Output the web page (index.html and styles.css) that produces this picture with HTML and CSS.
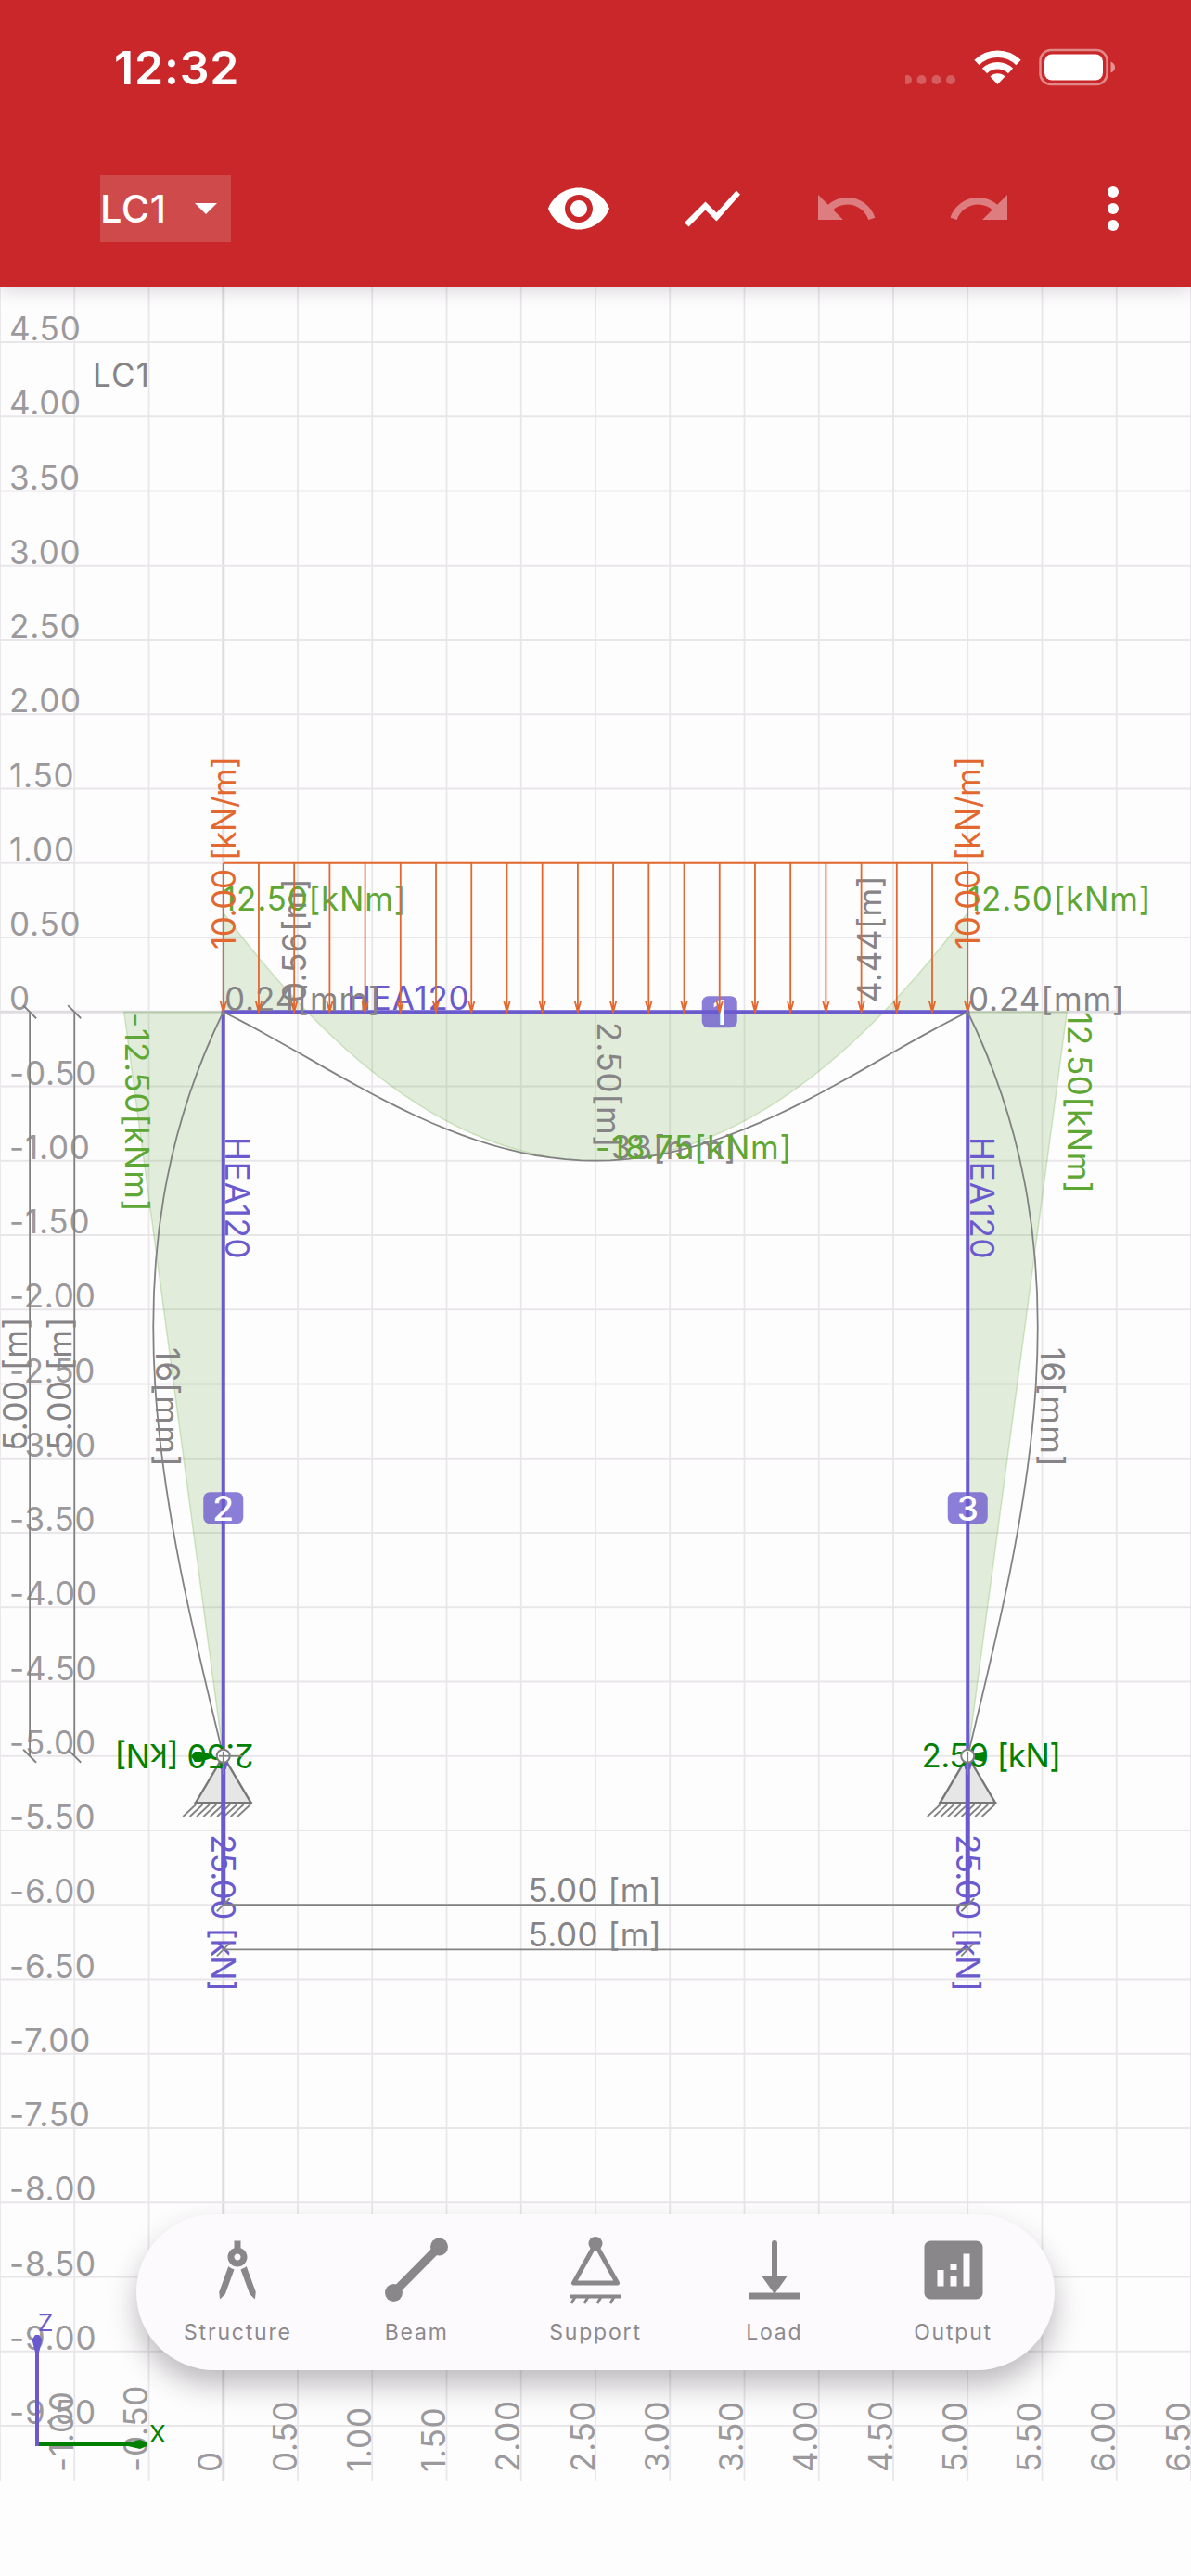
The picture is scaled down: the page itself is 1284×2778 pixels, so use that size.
FILE: index.html
```
<!DOCTYPE html>
<html lang="en">
<head>
    <meta charset="UTF-8">
    <meta name="viewport" content="width=device-width, initial-scale=1.0">
    <title>Frame Design</title>
    <link rel="stylesheet" href="styles.css">
</head>
<body>
    <header class="header">
        <div class="status-bar">
            <span class="time">12:32</span>
            <svg class="status-icons" width="226" height="42" viewBox="976 52 226 42">
                <g fill="#fff" opacity=".25">
                    <circle cx="978" cy="86" r="5"/>
                    <circle cx="993.5" cy="86" r="5"/>
                    <circle cx="1009.5" cy="86" r="5"/>
                    <circle cx="1025" cy="86" r="5"/>
                </g>
                <g fill="none" stroke="#fff" stroke-width="7.5">
                    <path d="M1053 67.5a32 32 0 0 1 45 0"/>
                    <path d="M1061.5 76.500a20 20 0 0 1 28 0"/>
                </g>
                <path d="M1075.500 91l-8-8.500a11.500 11.500 0 0 1 16 0z" fill="#fff"/>
                <rect x="1121.500" y="54" width="72" height="37" rx="11.500" fill="none" stroke="#fff" stroke-width="2.500" opacity=".45"/>
                <rect x="1126" y="58.500" width="63" height="28" rx="8" fill="#fff"/>
                <path d="M1197.500 66.500q4.500 2 4.500 6t-4.500 6z" fill="#fff" opacity=".5"/>
            </svg>
        </div>
        <div class="toolbar">
            <button class="load-case">LC1
                <svg width="24" height="12" viewBox="0 0 24 12"><path d="M0 0h24L12 12z"/></svg>
            </button>
            <div class="actions">
                <svg class="icon" viewBox="0 0 24 24"><path d="M12 4.500C7 4.500 2.730 7.610 1 12c1.730 4.390 6 7.500 11 7.500s9.270-3.110 11-7.500c-1.730-4.390-6-7.500-11-7.500zM12 17c-2.760 0-5-2.240-5-5s2.240-5 5-5 5 2.240 5 5-2.240 5-5 5zm0-8c-1.660 0-3 1.340-3 3s1.340 3 3 3 3-1.340 3-3-1.340-3-3-3z"/></svg>
                <svg class="icon" viewBox="0 0 24 24"><path d="M3.500 18.490l6-6.010 4 4L22 6.920l-1.410-1.410-7.090 7.970-4-4L2 16.990z"/></svg>
                <svg class="icon disabled" viewBox="0 0 24 24"><path d="M12.500 8c-2.650 0-5.050.99-6.900 2.600L2 7v9h9l-3.620-3.620c1.390-1.160 3.160-1.880 5.120-1.880 3.540 0 6.550 2.310 7.600 5.500l2.370-.78C21.080 11.030 17.150 8 12.500 8z"/></svg>
                <svg class="icon disabled" viewBox="0 0 24 24"><path d="M18.400 10.600C16.550 8.990 14.150 8 11.500 8c-4.650 0-8.580 3.030-9.960 7.220L3.900 16c1.050-3.190 4.050-5.500 7.600-5.500 1.950 0 3.730.72 5.120 1.880L13 16h9V7l-3.600 3.600z"/></svg>
                <svg class="icon" viewBox="0 0 24 24"><circle cx="12" cy="6" r="2"/><circle cx="12" cy="12" r="2"/><circle cx="12" cy="18" r="2"/></svg>
            </div>
        </div>
    </header>

    <main class="workspace">
        <svg id="drawing" class="drawing" width="1284" height="2367" viewBox="0 309 1284 2367"></svg>
    </main>

    <nav class="dock">
        <a class="dock-item">
            <svg viewBox="0 0 24 24"><path fill-rule="evenodd" d="M6.360 18.780L6.610 21l1.620-1.540 2.770-7.600c-.68-.17-1.280-.51-1.770-.98zM14.770 10.880c-.49.47-1.100.81-1.770.98l2.770 7.600L17.390 21l.26-2.220zM15 8c0-1.300-.84-2.400-2-2.820V3h-2v2.180C9.840 5.600 9 6.700 9 8c0 1.660 1.340 3 3 3s3-1.340 3-3zM12 9c-.55 0-1-.45-1-1s.45-1 1-1 1 .45 1 1-.45 1-1 1z"/></svg>
            <span>Structure</span>
        </a>
        <a class="dock-item">
            <svg viewBox="0 0 84 84"><circle cx="66.500" cy="17" r="9.500"/><circle cx="17.500" cy="66.500" r="9.500"/><path d="M17.500 66.500l49-49.500" stroke-width="9"/></svg>
            <span>Beam</span>
        </a>
        <a class="dock-item">
            <svg viewBox="0 0 84 84"><circle cx="42" cy="13.500" r="7.500"/><path d="M42 14L18.500 56h47z" fill="none" stroke-width="5" stroke-linejoin="round"/><path d="M14 70.500h56" stroke-width="4"/><path d="M20 71l-4 7M34 71l-4 7M48 71l-4 7M62 71l-4 7" stroke-width="3"/></svg>
            <span>Support</span>
        </a>
        <a class="dock-item">
            <svg viewBox="0 0 84 84"><path d="M42 13v44" stroke-width="6" stroke-linecap="round"/><path d="M28.500 49h27L42 68z"/><path d="M14 66.500h56v7H14z"/></svg>
            <span>Load</span>
        </a>
        <a class="dock-item">
            <svg viewBox="0 0 24 24"><path fill-rule="evenodd" d="M19 3H5c-1.100 0-2 .9-2 2v14c0 1.100.9 2 2 2h14c1.100 0 2-.9 2-2V5c0-1.100-.9-2-2-2zM9 17H7v-5h2v5zm4 0h-2v-3h2v3zm0-5h-2v-2h2v2zm4 5h-2V7h2v10z"/></svg>
            <span>Output</span>
        </a>
    </nav>
    <script src="script.js"></script>
</body>
</html>
```
FILE: styles.css
```
*{
    padding: 0;
    margin: 0;
    box-sizing: border-box;
}
body{
    width: 1284px;
    height: 2778px;
    overflow: hidden;
    background-color: #fefdfe;
    font-family: Inter, "Liberation Sans", sans-serif;
}
.header{
    position: relative;
    height: 309px;
    background-color: #c92729;
    color: #fff;
    box-shadow: 0 2px 20px rgba(60, 50, 60, 0.24);
}
.status-bar{
    height: 146px;
    padding: 0 82px 0 123px;
    display: flex;
    justify-content: space-between;
    align-items: center;
}
.time{
    font-size: 50px;
    font-weight: 600;
    letter-spacing: 0.8px;
}
.toolbar{
    height: 158px;
    padding: 0 48px 0 108px;
    display: flex;
    justify-content: space-between;
    align-items: center;
}
.load-case{
    width: 141px;
    height: 72px;
    padding: 0 15px 0 0;
    display: flex;
    justify-content: space-between;
    align-items: center;
    border: none;
    background-color: #cf4a4a;
    color: #fff;
    font-family: inherit;
    font-size: 41.5px;
    font-weight: 500;
    letter-spacing: 0.5px;
}
.load-case svg{
    fill: #fff;
}
.actions{
    display: flex;
    gap: 72px;
}
.icon{
    width: 72px;
    height: 72px;
    fill: #fff;
}
.disabled{
    opacity: 0.4;
}
.workspace{
    height: 2367px;
}
.drawing{
    display: block;
}

/* drawing */
.grid{
    stroke: #e9e6ea;
    stroke-width: 1.8;
}
.axis{
    stroke: #dfdce0;
    stroke-width: 3;
}
.drawing text{
    font-size: 35px;
}
.label{
    fill: #9b999c;
}
.gray{
    fill: #868486;
}
.green{
    fill: #5fa735;
}
.orange{
    fill: #e2682f;
}
.purple{
    fill: #6a5acd;
}
.reaction{
    fill: #008000;
}
.moment{
    fill: #5fa735;
    fill-opacity: 0.18;
    stroke: #5fa735;
    stroke-opacity: 0.25;
    stroke-width: 1.5;
}
.thin{
    fill: none;
    stroke: #828282;
    stroke-width: 1.8;
}
.member{
    stroke: #6a5acd;
    stroke-width: 4;
}
.force{
    stroke: #6a5acd;
    stroke-width: 5;
}
.load{
    fill: none;
    stroke: #e2682f;
    stroke-width: 1.8;
}
.badge{
    fill: #6a5acd;
    fill-opacity: 0.78;
}
.drawing .badge-text{
    fill: #fff;
    font-size: 37px;
    font-weight: 500;
    text-anchor: middle;
}
.support{
    fill: #808080;
    fill-opacity: 0.18;
    stroke: #777;
    stroke-width: 2.4;
}
.base{
    stroke: #777;
    stroke-width: 3.2;
}
.hinge{
    fill: #fff;
    stroke: #808080;
    stroke-width: 2;
}
.drawing .axis-name{
    font-size: 26px;
}

/* bottom menu */
.dock{
    position: absolute;
    left: 147px;
    top: 2388px;
    width: 990px;
    height: 168px;
    padding: 18px 13px 0;
    display: flex;
    border-radius: 84px;
    background-color: #fcfafd;
    box-shadow: 0 16px 30px rgba(40, 35, 40, 0.3);
}
.dock-item{
    flex: 1;
    display: flex;
    flex-direction: column;
    align-items: center;
    gap: 11px;
    color: #8c898d;
    font-size: 23px;
    letter-spacing: 1.8px;
}
.dock-item svg{
    width: 84px;
    height: 84px;
    fill: #8a878b;
}
.dock-item path[stroke-width]{
    stroke: #8a878b;
}
```
FILE: script.js
```
const drawing = document.getElementById('drawing');

// one metre is 160.5px, the origin is the top of the left column
const M = 160.5;
const X0 = 240.75;
const Y0 = 1091.25;
const X5 = X0 + 5 * M;
const Y5 = Y0 + 5 * M;
const px = m => X0 + m * M;
const py = m => Y0 - m * M;

let out = '';

function line(x1, y1, x2, y2, cls) {
  out += `<line x1="${x1}" y1="${y1}" x2="${x2}" y2="${y2}" class="${cls}"/>`;
}
function path(d, cls) {
  out += `<path d="${d}" class="${cls}"/>`;
}
function text(str, x, y, cls, angle = 0, spacing = 0.8) {
  out += `<text transform="translate(${x} ${y}) rotate(${angle})" class="${cls}" letter-spacing="${spacing}">${str}</text>`;
}
function format(m) {
  return m === 0 ? '0' : m.toFixed(2);
}

// grid
for (let m = -1.5; m <= 6.5; m += 0.5) {
  line(px(m), 309, px(m), 2676, m === 0 ? 'axis' : 'grid');
}
for (let m = 4.5; m >= -9.5; m -= 0.5) {
  line(0, py(m), 1284, py(m), m === 0 ? 'axis' : 'grid');
  text(format(m), 10, py(m) - 2, 'label');
}
for (let m = -1; m <= 6.5; m += 0.5) {
  text(format(m), px(m) - 1.3, 2666, 'label', -90);
}
text('LC1', 100, 417, 'gray', 0, 1.2);

// bending moments
path(`M${X0} ${Y0}V984.25Q642 1519.25 ${X5} 984.25V${Y0}Z`, 'moment');
path(`M${X0} ${Y0}H133.75L${X0} ${Y5}Z`, 'moment');
path(`M${X5} ${Y0}H1150.25L${X5} ${Y5}Z`, 'moment');

// members
line(X0 - 2, Y0, X5 + 2, Y0, 'member');
line(X0, Y0, X0, Y5, 'member');
line(X5, Y0, X5, Y5, 'member');
text('HEA120', 374, 1089, 'purple');
text('HEA120', 243, 1226, 'purple', 90);
text('HEA120', 1046, 1226, 'purple', 90);

function badge(n, x, y, w) {
  out += `<rect x="${x - w / 2}" y="${y - 17}" width="${w}" height="34" rx="7" class="badge"/>`;
  out += `<text x="${x}" y="${y + 13.5}" class="badge-text">${n}</text>`;
}
badge(1, 775.75, Y0, 38);
badge(2, X0, 1626.25, 43);
badge(3, X5, 1626.25, 43);

// deflection
let beam = `M${X0} ${Y0}`;
for (let s = 0.1; s < 5.05; s += 0.1) {
  const w = 12.5 * s * s / 2 - 25 * s ** 3 / 6 + 5 * s ** 4 / 12 + 20.833 * s;
  beam += `L${px(s).toFixed(1)} ${(Y0 + w * 3.79).toFixed(1)}`;
}
path(beam, 'thin');
path(`M${X0} ${Y5}C175.35 1626.25 109.95 1358.75 ${X0} ${Y0}`, 'thin');
path(`M${X5} ${Y5}C1108.65 1626.25 1174.05 1358.75 ${X5} ${Y0}`, 'thin');

text('0.24[mm]', 242, 1089.5, 'gray', 0, 0.9);
text('0.24[mm]', 1044, 1089.5, 'gray', 0, 0.9);
text('0.56[m]', 330, 1081, 'gray', -90, 0.6);
text('4.44[m]', 949.7, 1081, 'gray', -90, 0.6);
text('2.50[m]', 643.7, 1102, 'gray', 90);
text('-33[mm]', 642, 1249.5, 'gray', 0, 1);
text('16[mm]', 167.7, 1453, 'gray', 90, 1.2);
text('16[mm]', 1121.7, 1453, 'gray', 90, 1.2);
text('12.50[kNm]', 240, 982, 'green');
text('12.50[kNm]', 1043, 982, 'green');
text('-18.75[kNm]', 642, 1249.5, 'green');
text('-12.50[kNm]', 135, 1092, 'green', 90);
text('12.50[kNm]', 1151, 1091, 'green', 90, 0.6);

// distributed load
line(X0, py(1), X5, py(1), 'load');
for (let i = 0; i <= 21; i++) {
  const x = X0 + i * 5 * M / 21;
  path(`M${x} ${py(1)}V${Y0}M${x - 3.2} 1079.5L${x} ${Y0}L${x + 3.2} 1079.5`, 'load');
}
text('10.00 [kN/m]', 253.7, 1024, 'orange', -90, -0.45);
text('10.00 [kN/m]', 1056.2, 1024, 'orange', -90, -0.45);

// dimensions
for (const x of [32.1, 80.25]) {
  line(x, Y0, x, Y5, 'thin');
  line(x - 7, Y0 - 7, x + 7, Y0 + 7, 'thin');
  line(x - 7, Y5 - 7, x + 7, Y5 + 7, 'thin');
  text('5.00 [m]', x - 2.8, 1564, 'gray', -90, 0.5);
}

// supports and reactions
for (const x of [X0, X5]) {
  path(`M${x} ${Y5}L${x + 30} 1944.5H${x - 30}Z`, 'support');
  line(x - 31, 1944.5, x + 31, 1944.5, 'base');
  for (let i = 0; i < 9; i++) {
    const hx = x - 29.5 + i * 7.35;
    line(hx, 1946, hx - 14, 1959, 'thin');
  }
  line(x, 1898, x, 2054, 'force');
  path(`M${x - 5} 1900h10l-2 8h-6z`, 'purple');
}
text('2.50 [kN]', 274, 1881, 'reaction', 180, -0.6);
text('2.50 [kN]', 993.5, 1906, 'reaction', 0, -0.6);
path('M206 1894L210 1889H216L228 1892V1896L216 1900H210Z', 'reaction');
path('M1063 1894L1061 1889L1049 1891V1897L1061 1900Z', 'reaction');
text('25.00 [kN]', 228, 1978, 'purple', 90, -0.7);
text('25.00 [kN]', 1030.7, 1978, 'purple', 90, -0.7);
for (const x of [X0, X5]) {
  out += `<circle cx="${x}" cy="${Y5}" r="7" class="hinge"/>`;
  line(x, Y5 - 5, x, Y5 + 20, 'thin');
}
line(X0 - 5, Y5, X0 + 21, Y5, 'thin');

for (const y of [2054.25, 2102.4]) {
  line(X0, y, X5, y, 'thin');
  line(X0 - 7, y + 7, X0 + 7, y - 7, 'thin');
  line(X5 - 7, y + 7, X5 + 7, y - 7, 'thin');
  text('5.00 [m]', 569.5, y - 3.2, 'gray', 0, 0.5);
}

// axis directions
path('M38 2638V2537L34.5 2523L38 2518H42L45.500 2523L42 2537V2638Z', 'purple');
path('M42 2634H138L151 2631L158 2634V2638L151 2641L138 2638H42Z', 'reaction');
text('Z', 41, 2513.7, 'purple axis-name');
text('X', 161, 2634, 'reaction axis-name');

drawing.innerHTML = out;
```
